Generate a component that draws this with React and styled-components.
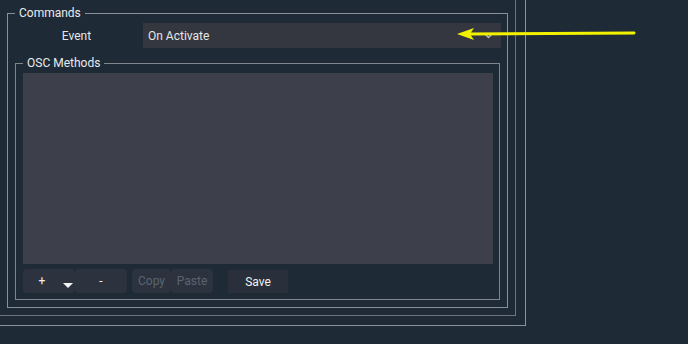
import React from "react";
import styled, { createGlobalStyle } from "styled-components";

const GlobalStyle = createGlobalStyle`
  html, body {
    margin: 0;
    padding: 0;
    background: #1f2a37;
    overflow: hidden;
  }
  body {
    font-family: Roboto, "Liberation Sans", sans-serif;
    font-size: 12px;
    color: #e4e6e8;
  }
`;

const Screen = styled.div`
  position: relative;
  width: 688px;
  height: 344px;
  overflow: hidden;
`;

// the two outer frames run off the top-left of the window
const Frame = styled.div`
  box-sizing: border-box;
  border: 1px solid ${p => p.$line};
  margin: ${p => p.$offset}px 0 0 ${p => p.$offset}px;
  padding: ${p => p.$pad};
  width: ${p => (p.$width ? p.$width + "px" : "auto")};
`;

const Inset = styled.div`
  padding: 34px 0 0 35px;
`;

const Group = styled.fieldset`
  margin: ${p => p.$top || 0}px 0 0 0;
  padding: ${p => p.$pad};
  border: 1px solid ${p => p.$line};
  min-width: 0;
`;

const Legend = styled.legend`
  margin-left: 0;
  padding: 0 4px;
  font-size: 12px;
  line-height: 14px;
  color: #e8eaec;
`;

const Row = styled.div`
  display: flex;
  align-items: stretch;
  height: 25px;
`;

const Label = styled.div`
  width: 128px;
  padding-right: 5px;
  box-sizing: border-box;
  display: flex;
  align-items: center;
  justify-content: center;
`;

const Combo = styled.div`
  position: relative;
  flex: 1;
  background: #34373f;
  display: flex;
  align-items: center;
  padding-left: 5px;
  margin-right: -1px;
`;

const Chevron = styled.svg`
  position: absolute;
  right: 8px;
  top: 10px;
`;

const List = styled.div`
  height: 191px;
  background: #3d3f4b;
`;

const Toolbar = styled.div`
  display: flex;
  align-items: flex-start;
  margin-top: 5px;
  height: 24px;
`;

const Button = styled.div`
  position: relative;
  box-sizing: border-box;
  width: ${p => p.$w}px;
  height: ${p => (p.$square ? 23 : 24)}px;
  margin-left: ${p => p.$gap || 0}px;
  margin-top: ${p => (p.$square ? 1 : 0)}px;
  padding-right: ${p => p.$shift || 0}px;
  border-radius: ${p => (p.$square ? 0 : 4)}px;
  background: ${p => (p.$square ? "#29303b" : "#2c333e")};
  color: ${p => (p.$disabled ? "#5b6470" : "#f0f0f0")};
  display: flex;
  align-items: center;
  justify-content: center;
  font-size: 12px;
`;

const Caret = styled.span`
  position: absolute;
  left: 40px;
  top: 14px;
  width: 0;
  height: 0;
  border-left: 5px solid transparent;
  border-right: 5px solid transparent;
  border-top: 5px solid #f4f4f4;
`;

const Pointer = styled.svg`
  position: absolute;
  left: 0;
  top: 0;
  pointer-events: none;
`;

export default function App() {
  return (
    <Screen>
      <GlobalStyle />
      <Frame $line="#8c9298" $offset={-30} $width={556} $pad="0 9px 9px 0">
        <Frame $line="#6e747a" $offset={0} $pad="0 7px 7px 0">
          <Inset>
            <Group $line="#8a9096" $pad="3px 7px 7px 7px">
              <Legend>Commands</Legend>
              <Row>
                <Label>Event</Label>
                <Combo>
                  On Activate
                  <Chevron width="9" height="6" viewBox="0 0 9 6">
                    <path d="M1 1 L4.5 4.5 L8 1" stroke="#b9bcc2" strokeWidth="1.4" fill="none" />
                  </Chevron>
                </Combo>
              </Row>
              <Group $line="#7f858b" $top={8} $pad="3px 6px 6px 7px">
                <Legend>OSC Methods</Legend>
                <List />
                <Toolbar>
                  <Button $w={52} $shift={14}>
                    +<Caret />
                  </Button>
                  <Button $w={52}>-</Button>
                  <Button $w={39} $gap={5} $disabled>Copy</Button>
                  <Button $w={42} $disabled>Paste</Button>
                  <Button $w={60} $gap={15} $square>Save</Button>
                </Toolbar>
              </Group>
            </Group>
          </Inset>
        </Frame>
      </Frame>
      <Pointer width="688" height="344" viewBox="0 0 688 344">
        <line x1="469" y1="34" x2="634" y2="33" stroke="#f2f200" strokeWidth="3" strokeLinecap="round" />
        <polygon points="457,34 474,28 470,34 474,40" fill="#f2f200" />
      </Pointer>
    </Screen>
  );
}
